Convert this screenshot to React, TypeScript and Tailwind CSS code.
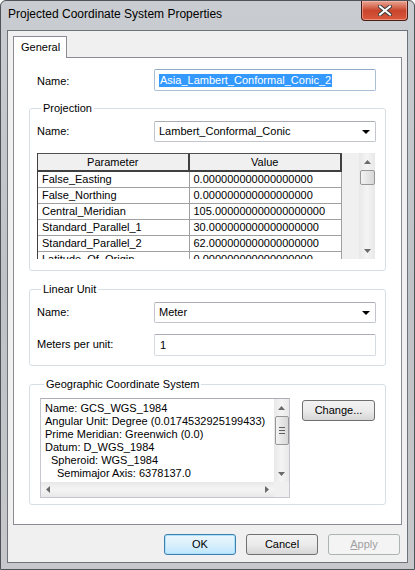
import React from "react"

const rows = [
  ["False_Easting", "0.000000000000000000"],
  ["False_Northing", "0.000000000000000000"],
  ["Central_Meridian", "105.000000000000000000"],
  ["Standard_Parallel_1", "30.000000000000000000"],
  ["Standard_Parallel_2", "62.000000000000000000"],
  ["Latitude_Of_Origin", "0.000000000000000000"],
]

const gcsLines = [
  { text: "Name: GCS_WGS_1984", indent: "pl-0" },
  { text: "Angular Unit: Degree (0.0174532925199433)", indent: "pl-0" },
  { text: "Prime Meridian: Greenwich (0.0)", indent: "pl-0" },
  { text: "Datum: D_WGS_1984", indent: "pl-0" },
  { text: "Spheroid: WGS_1984", indent: "pl-[6px]" },
  { text: "Semimajor Axis: 6378137.0", indent: "pl-[12px]" },
]

function Arrow({ dir }: { dir: "up" | "down" | "left" | "right" }) {
  const pts = {
    up: "0,4 3.5,0 7,4",
    down: "0,0 3.5,4 7,0",
    left: "4,0 0,3.5 4,7",
    right: "0,0 4,3.5 0,7",
  }[dir]
  const w = dir === "up" || dir === "down" ? 7 : 4
  const h = dir === "up" || dir === "down" ? 4 : 7
  return (
    <svg width={w} height={h} viewBox={`0 0 ${w} ${h}`}>
      <polygon points={pts} fill="#6a6a6a" />
    </svg>
  )
}

function ComboBox({ value }: { value: string }) {
  return (
    <div className="w-[222px] h-[21px] flex items-center justify-between bg-white border border-[#c2c6cc] border-t-[#abadb3] rounded-[2px] pl-[4px] pr-[5px]">
      <span>{value}</span>
      <svg width="8" height="4" viewBox="0 0 8 4">
        <polygon points="0,0 8,0 4,4" fill="#000" />
      </svg>
    </div>
  )
}

function Button({ label, primary, disabled, wide }: { label: React.ReactNode; primary?: boolean; disabled?: boolean; wide?: boolean }) {
  let cls = "border-[#707070] bg-gradient-to-b from-[#f2f2f2] via-[#ebebeb] to-[#d6d6d6] text-black"
  if (primary) cls = "border-[#3c7fb1] bg-gradient-to-b from-[#eaf6fd] via-[#d9f0fc] to-[#bee6fd] text-black shadow-[inset_0_0_0_1px_#aee0fa]"
  if (disabled) cls = "border-[#adb2b5] bg-[#f4f4f4] text-[#a0a0a0]"
  return (
    <div className={`${wide ? "w-[73px]" : "w-[72px]"} h-[21px] flex items-center justify-center border rounded-[3px] ${cls}`}>
      {label}
    </div>
  )
}

function Group({ title, children, className }: { title: string; children: React.ReactNode; className?: string }) {
  return (
    <fieldset className={`border border-[#d5dfe5] rounded-[3px] px-[7px] ${className ?? ""}`}>
      <legend className="ml-[4px] px-[2px] leading-[13px]">{title}</legend>
      {children}
    </fieldset>
  )
}

export default function App() {
  return (
    <div className="w-[415px] h-[570px] flex flex-col bg-gradient-to-b from-[#c9ccd0] via-[#bfc2c6] to-[#c6c8cb] border border-[#4f5257] rounded-t-[6px] font-['Liberation_Sans',Arial,sans-serif] text-[11px] text-black overflow-hidden">
      {/* title bar */}
      <div className="h-[29px] flex items-start justify-between">
        <div className="pl-[7px] pt-[6px] text-[12px] leading-[15px] text-black">Projected Coordinate System Properties</div>
        <div className="mr-[6px] w-[47px] h-[20px] flex items-center justify-center rounded-b-[4px] border border-t-0 border-[#4a1e16] bg-gradient-to-b from-[#e8a493] via-[#c9452c] to-[#d9583b] shadow-[inset_0_0_0_1px_rgba(255,200,190,0.5)]">
          <svg width="14" height="11" viewBox="0 0 14 11">
            <path d="M2 1.5 L12 9.5 M12 1.5 L2 9.5" stroke="#3a3a3a" strokeWidth="4" strokeLinecap="square" />
            <path d="M2 1.5 L12 9.5 M12 1.5 L2 9.5" stroke="#ffffff" strokeWidth="2" strokeLinecap="square" />
          </svg>
        </div>
      </div>

      {/* client area */}
      <div className="mx-[6px] h-[533px] flex flex-col bg-[#f0f0f0] border border-[#6e737a]">
        <div className="pl-[5px] pt-[5px]">
          <div className="w-[54px] h-[22px] flex items-center pl-[7px] bg-white border border-b-0 border-[#898c95] relative z-10 -mb-px">
            General
          </div>
        </div>
        <div className="mx-[5px] h-[468px] bg-white border border-[#898c95] px-[15px] pt-[11px] flex flex-col">
          <div className="flex items-start">
            <div className="w-[125px] pl-[8px] pt-[4px]">Name:</div>
            <div className="w-[222px] h-[22px] flex items-center bg-white border border-[#a9bfd6] border-t-[#8fa9c6] rounded-[2px] pl-[4px]">
              <span className="bg-[#3399ff] text-white leading-[13px] px-px">Asia_Lambert_Conformal_Conic_2</span>
            </div>
          </div>

          <Group title="Projection" className="mt-[11px] pb-[11px]">
            <div className="flex items-start pt-[6px]">
              <div className="w-[117px] pt-[2px]">Name:</div>
              <ComboBox value="Lambert_Conformal_Conic" />
            </div>
            <div className="mt-[11px] w-[338px] h-[106px] flex bg-[#f0f0f0]">
              <div className="w-[305px] flex flex-col overflow-hidden bg-white border-l border-[#404040]">
                <div className="h-[19px] flex shrink-0 bg-[#f0f0f0] border-t border-[#505050] border-b-2 border-b-[#404040]">
                  <div className="w-[152px] flex items-center justify-center border-r-2 border-[#404040]">Parameter</div>
                  <div className="w-[153px] flex items-center justify-center border-r-2 border-[#404040]">Value</div>
                </div>
                {rows.map(([p, v]) => (
                  <div key={p} className="h-[16px] flex shrink-0 border-b border-[#a0a0a0]">
                    <div className="w-[152px] pl-[4px] leading-[15px] border-r border-[#a0a0a0]">{p}</div>
                    <div className="w-[153px] pl-[4px] leading-[15px] border-r border-[#a0a0a0]">{v}</div>
                  </div>
                ))}
              </div>
              <div className="w-[17px]" />
              <div className="w-[16px] flex flex-col items-center bg-gradient-to-r from-[#e8e8e8] via-[#f4f4f4] to-[#e8e8e8]">
                <div className="h-[17px] flex items-center justify-center"><Arrow dir="up" /></div>
                <div className="w-[15px] h-[15px] rounded-[2px] border border-[#979797] bg-gradient-to-r from-[#f2f2f2] to-[#d8d8d8]" />
                <div className="flex-1" />
                <div className="h-[17px] flex items-center justify-center"><Arrow dir="down" /></div>
              </div>
            </div>
          </Group>

          <Group title="Linear Unit" className="mt-[12px] pb-[9px]">
            <div className="flex items-start pt-[6px]">
              <div className="w-[117px] pt-[2px]">Name:</div>
              <ComboBox value="Meter" />
            </div>
            <div className="flex items-start mt-[11px]">
              <div className="w-[117px] pt-[2px]">Meters per unit:</div>
              <div className="w-[222px] h-[22px] flex items-center bg-white border border-[#d6dbe1] border-t-[#abadb3] rounded-[2px] pl-[5px]">1</div>
            </div>
          </Group>

          <Group title="Geographic Coordinate System" className="mt-[12px] pb-[6px] pl-[10px]">
            <div className="flex items-start pt-[7px]">
              <div className="w-[250px] h-[100px] flex flex-col bg-white border border-[#c4c8ce] border-t-[#abadb3]">
                <div className="flex flex-1">
                  <div className="flex-1 pl-[4px] pt-[3px] leading-[13px] whitespace-nowrap overflow-hidden">
                    {gcsLines.map((l) => (
                      <div key={l.text} className={l.indent}>{l.text}</div>
                    ))}
                  </div>
                  <div className="w-[15px] flex flex-col items-center bg-gradient-to-r from-[#e8e8e8] via-[#f4f4f4] to-[#e8e8e8]">
                    <div className="h-[17px] flex items-center justify-center"><Arrow dir="up" /></div>
                    <div className="w-[14px] h-[29px] rounded-[2px] border border-[#979797] bg-gradient-to-r from-[#f2f2f2] to-[#d8d8d8] flex flex-col items-center justify-center gap-[2px]">
                      <div className="w-[6px] h-px bg-[#606060]" />
                      <div className="w-[6px] h-px bg-[#606060]" />
                      <div className="w-[6px] h-px bg-[#606060]" />
                    </div>
                    <div className="flex-1" />
                    <div className="h-[17px] flex items-center justify-center"><Arrow dir="down" /></div>
                  </div>
                </div>
                <div className="h-[15px] flex">
                  <div className="flex-1 flex items-center justify-between px-[5px] bg-gradient-to-b from-[#e8e8e8] via-[#f4f4f4] to-[#e8e8e8]">
                    <Arrow dir="left" />
                    <Arrow dir="right" />
                  </div>
                  <div className="w-[15px] bg-[#f0f0f0]" />
                </div>
              </div>
              <div className="ml-[12px] mt-[2px]">
                <Button label="Change..." wide />
              </div>
            </div>
          </Group>
        </div>

        <div className="flex justify-end gap-[10px] pr-[7px] mt-[9px]">
          <Button label="OK" primary />
          <Button label="Cancel" />
          <Button label={<span><span className="underline">A</span>pply</span>} disabled />
        </div>
      </div>
    </div>
  )
}
